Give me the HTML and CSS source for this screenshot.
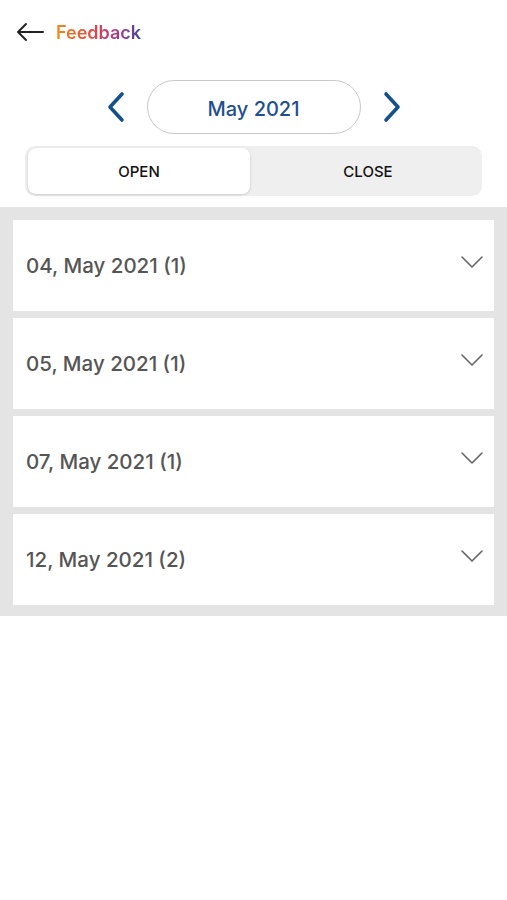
FILE: index.html
```html
<!DOCTYPE html>
<html lang="en">
<head>
    <meta charset="UTF-8">
    <meta name="viewport" content="width=device-width, initial-scale=1.0">
    <title>Feedback</title>
    <link rel="stylesheet" href="styles.css">
</head>
<body>

<header class="topbar">
    <svg class="back" width="30" height="20" viewBox="0 0 30 20">
        <path d="M28 10H3M11 2L3 10l8 8" fill="none" stroke="#222" stroke-width="2" stroke-linecap="round" stroke-linejoin="round"/>
    </svg>
    <span class="title">Feedback</span>
</header>

<div class="month-nav">
    <svg class="chev" width="20" height="32" viewBox="0 0 20 32">
        <path d="M16 3L4 16l12 13" fill="none" stroke="#14508c" stroke-width="3.6" stroke-linecap="round" stroke-linejoin="round"/>
    </svg>
    <div class="month-pill">May 2021</div>
    <svg class="chev" width="20" height="32" viewBox="0 0 20 32">
        <path d="M4 3l12 13L4 29" fill="none" stroke="#14508c" stroke-width="3.6" stroke-linecap="round" stroke-linejoin="round"/>
    </svg>
</div>

<div class="segment">
    <div class="seg-item active">OPEN</div>
    <div class="seg-item">CLOSE</div>
</div>

<div class="list">
    <div class="card"><span>04, May 2021 (1)</span><svg width="22" height="14" viewBox="0 0 22 14"><path d="M1 2l10 10L21 2" fill="none" stroke="#666" stroke-width="1.6" stroke-linecap="round" stroke-linejoin="round"/></svg></div>
    <div class="card"><span>05, May 2021 (1)</span><svg width="22" height="14" viewBox="0 0 22 14"><path d="M1 2l10 10L21 2" fill="none" stroke="#666" stroke-width="1.6" stroke-linecap="round" stroke-linejoin="round"/></svg></div>
    <div class="card"><span>07, May 2021 (1)</span><svg width="22" height="14" viewBox="0 0 22 14"><path d="M1 2l10 10L21 2" fill="none" stroke="#666" stroke-width="1.6" stroke-linecap="round" stroke-linejoin="round"/></svg></div>
    <div class="card"><span>12, May 2021 (2)</span><svg width="22" height="14" viewBox="0 0 22 14"><path d="M1 2l10 10L21 2" fill="none" stroke="#666" stroke-width="1.6" stroke-linecap="round" stroke-linejoin="round"/></svg></div>
</div>

</body>
</html>
```

FILE: styles.css
```css
* {
    margin: 0;
    padding: 0;
    box-sizing: border-box;
}

body {
    font-family: 'Inter', 'Roboto', sans-serif;
    background: #fff;
    color: #333;
}

/* Barra superior */
.topbar {
    display: flex;
    align-items: center;
    height: 64px;
    padding-left: 15px;
}

.back {
    display: block;
}

.title {
    margin-left: 11px;
    font-size: 18px;
    font-weight: 600;
    background: linear-gradient(90deg, #f08a1c 0%, #e24a3c 40%, #b0388a 70%, #3f4aa0 100%);
    -webkit-background-clip: text;
    background-clip: text;
    color: transparent;
}

/* Navegação de mês */
.month-nav {
    display: flex;
    align-items: center;
    justify-content: center;
    gap: 21px;
    margin-top: 16px;
}

.month-pill {
    width: 214px;
    height: 54px;
    border: 1px solid #c9c9c9;
    border-radius: 27px;
    display: flex;
    align-items: center;
    justify-content: center;
    padding-top: 3px;
    font-size: 20px;
    font-weight: 500;
    color: #1f4f92;
}

/* Abas */
.segment {
    display: flex;
    margin: 12px 25px 0;
    height: 50px;
    background: #efefef;
    border-radius: 10px;
    padding: 2px 3px;
}

.seg-item {
    flex: 1;
    display: flex;
    align-items: center;
    justify-content: center;
    padding-left: 7px;
    font-size: 15px;
    font-weight: 500;
    color: #111;
}

.seg-item.active {
    flex: 0 0 222px;
    padding-left: 0;
    background: #fff;
    border-radius: 8px;
    box-shadow: 0 1px 3px rgba(0, 0, 0, 0.15);
}

/* Lista */
.list {
    margin-top: 11px;
    background: #e4e4e4;
    padding: 13px 13px 11px;
    display: flex;
    flex-direction: column;
    gap: 7px;
}

.card {
    background: #fff;
    height: 91px;
    display: flex;
    align-items: center;
    justify-content: space-between;
    padding: 0 11px 0 13px;
    font-size: 20.5px;
    font-weight: 500;
    color: #555;
}

.card svg {
    margin-top: -8px;
}
```
